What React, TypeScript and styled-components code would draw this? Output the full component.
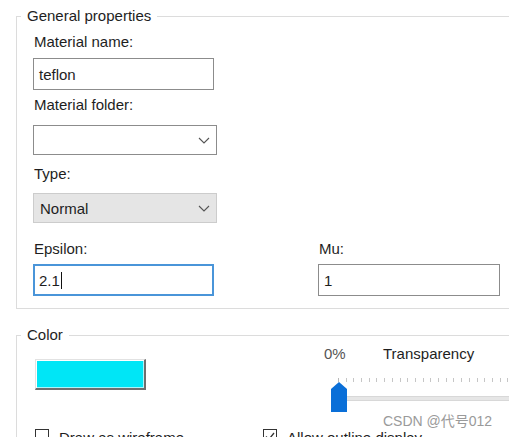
import React from "react";
import styled, { createGlobalStyle } from "styled-components";

const GlobalStyle = createGlobalStyle`
  html, body { margin: 0; padding: 0; background: #ffffff; }
  body {
    font-family: "Liberation Sans", Arial, sans-serif;
    font-size: 15px;
    color: #1e1e1e;
    overflow: hidden;
  }
`;

const Page = styled.div`
  position: relative;
  width: 509px;
  height: 437px;
  padding-top: 7px;
  box-sizing: border-box;
  display: flex;
  flex-direction: column;
`;

const Group = styled.fieldset<{ $top?: number }>`
  margin: ${(p) => p.$top ?? 0}px 0 0 16px;
  border: 1px solid #dcdcdc;
  border-right: none;
  padding: 0 0 ${(p) => (p.$top ? 0 : 12)}px 16px;
  min-width: 0;
`;

const Legend = styled.legend`
  padding: 0 6px;
  margin-left: -12px;
  font-size: 15px;
  line-height: 18px;
  color: #1e1e1e;
`;

const Label = styled.div<{ $mt: number }>`
  margin-top: ${(p) => p.$mt}px;
  padding-left: 1px;
  line-height: 18px;
  height: 18px;
`;

const TextBox = styled.div<{ $w: number; $mt: number; $focus?: boolean }>`
  box-sizing: border-box;
  width: ${(p) => p.$w}px;
  height: 32px;
  margin-top: ${(p) => p.$mt}px;
  border: ${(p) => (p.$focus ? "2px solid #4a95d9" : "1px solid #8c8c8c")};
  padding-left: ${(p) => (p.$focus ? 4 : 5)}px;
  display: flex;
  align-items: center;
  background: #fff;
`;

const Caret = styled.span`
  display: inline-block;
  width: 1px;
  height: 17px;
  background: #111;
  margin-left: 1px;
`;

const Select = styled.div<{ $mt: number; $gray?: boolean }>`
  box-sizing: border-box;
  width: 184px;
  height: 30px;
  margin-top: ${(p) => p.$mt}px;
  border: 1px solid ${(p) => (p.$gray ? "#cccccc" : "#8c8c8c")};
  background: ${(p) => (p.$gray ? "#e5e5e5" : "#ffffff")};
  display: flex;
  align-items: center;
  justify-content: space-between;
  padding: 0 6px 0 6px;
`;

const Chevron = () => (
  <svg width="12" height="7" viewBox="0 0 12 7">
    <polyline points="1,1 6,6 11,1" fill="none" stroke="#555" strokeWidth="1.1" />
  </svg>
);

const Pair = styled.div`
  display: grid;
  grid-template-columns: 181px 182px;
  column-gap: 104px;
  margin-top: 17px;
`;

const Field = styled.div`
  display: flex;
  flex-direction: column;
`;

const ColorGrid = styled.div`
  display: grid;
  grid-template-columns: 229px 1fr;
`;

const Swatch = styled.div`
  box-sizing: border-box;
  width: 111px;
  height: 31px;
  margin: 15px 0 0 2px;
  background: #00e6f6;
  border-style: solid;
  border-width: 1px 2px 2px 1px;
  border-color: #e2e2e2 #6e6e6e #6e6e6e #e2e2e2;
  box-shadow: inset 1px 1px 0 #ffffff, inset -1px -1px 0 #a8f4fa;
`;

const SliderArea = styled.div`
  padding-left: 62px;
  padding-top: 1px;
  display: flex;
  flex-direction: column;
`;

const SliderLabels = styled.div`
  display: flex;
  line-height: 18px;
`;

const Percent = styled.span`
  color: #555;
  width: 59px;
`;

const Ticks = styled.div`
  margin: 15px 0 0 14px;
  height: 4px;
  border-left: 1px solid #b8b8b8;
  position: relative;
  top: 0;
  background: repeating-linear-gradient(
    to right,
    transparent 0,
    transparent 6.7px,
    #c6c6c6 6.7px,
    #c6c6c6 7.7px
  );
`;

const Slider = styled.div`
  position: relative;
  margin-left: 7px;
  height: 30px;
`;

const Track = styled.div`
  margin-top: 14px;
  height: 5px;
  background: #e6e6e6;
  border-top: 1px solid #d8d8d8;
  border-bottom: 1px solid #d8d8d8;
  box-sizing: border-box;
`;

const Thumb = styled.svg`
  position: absolute;
  left: 0;
  top: 0;
`;

const CheckRow = styled.div`
  margin-top: 17px;
  display: flex;
  align-items: flex-start;
  gap: 10px;
  line-height: 18px;
`;

const Box = styled.span<{ $ml: number }>`
  box-sizing: border-box;
  width: 14px;
  height: 14px;
  margin: 0 0 0 ${(p) => p.$ml}px;
  border: 1px solid #333;
  display: flex;
  align-items: center;
  justify-content: center;
  flex: none;
`;

const Watermark = styled.div`
  position: absolute;
  left: 383px;
  top: 412px;
  font-family: "Liberation Sans", "Noto Sans CJK SC", sans-serif;
  font-size: 14px;
  line-height: 18px;
  color: #9a9a9a;
  white-space: nowrap;
`;

export default function App() {
  return (
    <>
      <GlobalStyle />
      <Page>
        <Group>
          <Legend>General properties</Legend>
          <Label $mt={8}>Material name:</Label>
          <TextBox $w={181} $mt={7}>teflon</TextBox>
          <Label $mt={6}>Material folder:</Label>
          <Select $mt={11}>
            <span />
            <Chevron />
          </Select>
          <Label $mt={10}>Type:</Label>
          <Select $mt={10} $gray>
            <span>Normal</span>
            <Chevron />
          </Select>
          <Pair>
            <Field>
              <Label $mt={0}>Epsilon:</Label>
              <TextBox $w={181} $mt={6} $focus>
                2.1
                <Caret />
              </TextBox>
            </Field>
            <Field>
              <Label $mt={0}>Mu:</Label>
              <TextBox $w={182} $mt={6}>1</TextBox>
            </Field>
          </Pair>
        </Group>
        <Group $top={17}>
          <Legend>Color</Legend>
          <ColorGrid>
            <Swatch />
            <SliderArea>
              <SliderLabels>
                <Percent>0%</Percent>
                <span>Transparency</span>
              </SliderLabels>
              <Ticks />
              <Slider>
                <Track />
                <Thumb width="16" height="30" viewBox="0 0 16 30">
                  <path d="M8 0 L16 7 L16 30 L0 30 L0 7 Z" fill="#0a6fd8" />
                </Thumb>
              </Slider>
            </SliderArea>
            <CheckRow>
              <Box $ml={2} />
              <span>Draw as wireframe</span>
            </CheckRow>
            <CheckRow>
              <Box $ml={1}>
                <svg width="10" height="9" viewBox="0 0 10 9">
                  <polyline points="1,4.5 3.8,7.5 9,1" fill="none" stroke="#333" strokeWidth="1.3" />
                </svg>
              </Box>
              <span>Allow outline display</span>
            </CheckRow>
          </ColorGrid>
        </Group>
        <Watermark>CSDN @代号012</Watermark>
      </Page>
    </>
  );
}
